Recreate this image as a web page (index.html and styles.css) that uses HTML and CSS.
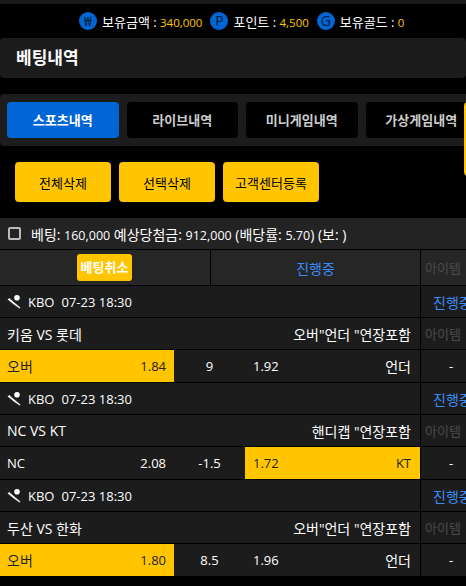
FILE: index.html
```html
<!DOCTYPE html>
<html lang="ko">
<head>
    <meta charset="UTF-8">
    <meta name="viewport" content="width=device-width, initial-scale=1.0">
    <title>베팅내역</title>
    <link rel="stylesheet" href="styles.css">
</head>
<body>
    <div class="top-edge"></div>
    <div class="wallet">
        <span class="coin">₩</span><span class="wallet-label">보유금액 : <b>340,000</b></span>
        <span class="coin">P</span><span class="wallet-label">포인트 : <b>4,500</b></span>
        <span class="coin">G</span><span class="wallet-label">보유골드 : <b>0</b></span>
    </div>
    <h1 class="title">베팅내역</h1>

    <div class="tabs">
        <a class="tab active">스포츠내역</a>
        <a class="tab">라이브내역</a>
        <a class="tab">미니게임내역</a>
        <a class="tab">가상게임내역</a>
    </div>
    <div class="side-tab"></div>

    <div class="actions">
        <button>전체삭제</button>
        <button>선택삭제</button>
        <button>고객센터등록</button>
    </div>

    <div class="summary">
        <span class="check"></span>
        <span>베팅: <i>160,000</i> 예상당첨금: <i>912,000</i> (배당률: <i>5.70</i>) (보: )</span>
    </div>

    <div class="bet-table">
        <div class="head-row">
            <div class="cell-center"><span class="cancel">베팅취소</span></div>
            <div class="cell-center status">진행중</div>
            <div class="item">아이템</div>
        </div>

        <div class="row">
            <div class="league">
                <svg class="bat" viewBox="0 0 14 14"><circle cx="10" cy="2.8" r="2.8" fill="#fff"/><path d="M0.4 4.6 2.2 2.8 7.6 7.4 13.6 12.6 12.6 13.8 6.4 9.4Z" fill="#fff" stroke="#1c1c1c" stroke-width="0.6"/></svg>
                <span>KBO</span><span>07-23 18:30</span>
            </div>
            <div class="status-side">진행중</div>
        </div>
        <div class="row">
            <div class="match"><span>키움 VS 롯데</span><span>오버"언더 "연장포함</span></div>
            <div class="item">아이템</div>
        </div>
        <div class="row odds">
            <div class="pick on"><span class="name">오버</span><span>1.84</span></div>
            <div class="mid">9</div>
            <div class="pick"><span>1.92</span><span class="name">언더</span></div>
            <div class="dash">-</div>
        </div>

        <div class="row">
            <div class="league">
                <svg class="bat" viewBox="0 0 14 14"><circle cx="10" cy="2.8" r="2.8" fill="#fff"/><path d="M0.4 4.6 2.2 2.8 7.6 7.4 13.6 12.6 12.6 13.8 6.4 9.4Z" fill="#fff" stroke="#1c1c1c" stroke-width="0.6"/></svg>
                <span>KBO</span><span>07-23 18:30</span>
            </div>
            <div class="status-side">진행중</div>
        </div>
        <div class="row">
            <div class="match"><span>NC VS KT</span><span>핸디캡 "연장포함</span></div>
            <div class="item">아이템</div>
        </div>
        <div class="row odds">
            <div class="pick"><span>NC</span><span>2.08</span></div>
            <div class="mid">-1.5</div>
            <div class="pick on"><span>1.72</span><span>KT</span></div>
            <div class="dash">-</div>
        </div>

        <div class="row">
            <div class="league">
                <svg class="bat" viewBox="0 0 14 14"><circle cx="10" cy="2.8" r="2.8" fill="#fff"/><path d="M0.4 4.6 2.2 2.8 7.6 7.4 13.6 12.6 12.6 13.8 6.4 9.4Z" fill="#fff" stroke="#1c1c1c" stroke-width="0.6"/></svg>
                <span>KBO</span><span>07-23 18:30</span>
            </div>
            <div class="status-side">진행중</div>
        </div>
        <div class="row">
            <div class="match"><span>두산 VS 한화</span><span>오버"언더 "연장포함</span></div>
            <div class="item">아이템</div>
        </div>
        <div class="row odds">
            <div class="pick on"><span class="name">오버</span><span>1.80</span></div>
            <div class="mid">8.5</div>
            <div class="pick"><span>1.96</span><span class="name">언더</span></div>
            <div class="dash">-</div>
        </div>
    </div>
</body>
</html>
```

FILE: styles.css
```css
html, body {
    height: 586px;
    overflow: hidden;
}

body {
    position: relative;
    margin: 0;
    background-color: #000;
    color: #fff;
    font-family: "Open Sans", "Noto Sans CJK KR", sans-serif;
    font-size: 13px;
}

.top-edge {
    height: 4px;
    background-color: #1a1a1a;
}

.wallet {
    height: 34px;
    display: flex;
    align-items: center;
    padding-left: 79px;
    box-sizing: border-box;
}

.coin {
    width: 18px;
    height: 18px;
    margin-right: 5px;
    border-radius: 50%;
    background-color: #0066d6;
    color: #0a1c33;
    font-size: 14px;
    line-height: 18px;
    text-align: center;
}

.wallet-label {
    margin-right: 8px;
}

.wallet-label:last-child {
    margin-right: 0;
}

.wallet-label b {
    color: #ffc600;
    font-size: 11.5px;
    font-weight: 400;
}

.title {
    height: 40px;
    margin: 0;
    padding-left: 16px;
    background-color: #1c1c1c;
    border-radius: 4px;
    font-size: 17px;
    font-weight: 700;
    line-height: 40px;
}

.tabs {
    display: flex;
    gap: 8px;
    width: 500px;
    height: 52px;
    margin-top: 16px;
    padding: 8px 7px;
    box-sizing: border-box;
    background-color: #1c1c1c;
    border-radius: 4px;
}

.tab {
    flex: 0 0 111.5px;
    height: 36px;
    background-color: #000;
    border-radius: 4px;
    color: #ccc;
    font-weight: 700;
    line-height: 36px;
    text-align: center;
}

.tab.active {
    background-color: #0066d6;
    color: #fff;
}

/* yellow edge peeking in from the right */
.side-tab {
    position: absolute;
    top: 102px;
    left: 464px;
    width: 10px;
    height: 74px;
    background-color: #ffc600;
    border-radius: 4px;
}

.actions {
    display: flex;
    gap: 8px;
    padding: 16px 15px;
}

.actions button {
    width: 96px;
    height: 40px;
    padding: 0;
    background-color: #ffc600;
    border: none;
    border-radius: 4px;
    color: #000;
    font-family: inherit;
    font-size: 13px;
}

.summary {
    display: flex;
    align-items: center;
    gap: 10px;
    height: 31px;
    padding-left: 8px;
    background-color: #232323;
    font-size: 14px;
}

.summary i {
    font-size: 12.5px;
    font-style: normal;
}

.check {
    width: 9px;
    height: 9px;
    border: 2px solid #bbb;
    border-radius: 2px;
}

.bet-table {
    width: 480px;
    padding-top: 1px;
}

.head-row {
    display: grid;
    grid-template-columns: 210px 209px 1fr;
    column-gap: 1px;
    height: 35px;
    margin-bottom: 1px;
    background-color: #000;
}

.head-row > div {
    background-color: #262626;
}

.cell-center {
    display: flex;
    align-items: center;
    justify-content: center;
}

.cancel {
    width: 55px;
    height: 27px;
    margin-right: 1px;
    background-color: #ffc600;
    border-radius: 3px;
    font-weight: 700;
    line-height: 27px;
    text-align: center;
    color: #fff;
}

.status {
    color: #3b8bf5;
    font-size: 14px;
}

.item {
    display: flex;
    align-items: center;
    padding-left: 4px;
    background-color: #1c1c1c;
    color: #4a4a4a;
}

.head-row .item {
    background-color: #262626;
}

.row {
    display: grid;
    grid-template-columns: 420px 1fr;
    column-gap: 1px;
    height: 31px;
    margin-bottom: 1px;
    background-color: #000;
}

.league,
.match,
.status-side {
    display: flex;
    align-items: center;
    background-color: #1c1c1c;
}

.league {
    gap: 7px;
    padding-left: 7px;
}

.bat {
    width: 14px;
    height: 14px;
}

.match {
    justify-content: space-between;
    padding: 0 9px 0 7px;
    font-size: 14px;
}

.status-side {
    padding-left: 12px;
    color: #3b8bf5;
    font-size: 14px;
}

.row.odds {
    grid-template-columns: 174px 71px 175px 1fr;
    column-gap: 0;
    height: 32px;
    border-bottom: 1px solid #000;
    margin-bottom: 0;
}

.pick {
    display: flex;
    align-items: center;
    justify-content: space-between;
    padding: 0 8px 0 7px;
    background-color: #1c1c1c;
}

.pick + .mid + .pick {
    padding: 0 9px 0 8px;
}

.pick .name {
    font-size: 14px;
}

.pick.on {
    background-color: #ffc600;
    color: #222;
}

.mid {
    display: flex;
    align-items: center;
    justify-content: center;
    background-color: #1c1c1c;
}

.dash {
    display: flex;
    align-items: center;
    margin-left: 1px;
    padding-left: 28px;
    background-color: #1c1c1c;
}
```
